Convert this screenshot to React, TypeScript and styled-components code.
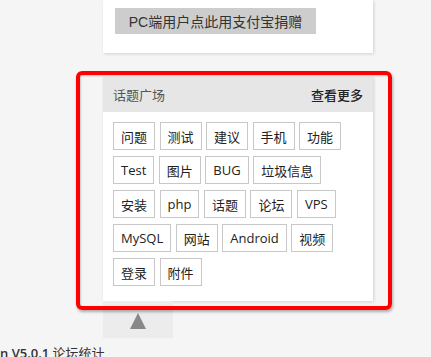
import React from "react";
import styled, { createGlobalStyle } from "styled-components";

const Global = createGlobalStyle`
  html, body { margin: 0; padding: 0; background: #f5f5f5; }
  body { font-family: "Open Sans", "Noto Sans CJK SC", sans-serif; color: #333; overflow: hidden; }
`;

const Page = styled.div`
  position: relative;
  width: 431px;
  height: 357px;
  overflow: hidden;
`;

const Column = styled.div`
  margin-left: 103px;
  width: 270px;
  display: flex;
  flex-direction: column;
`;

const Card = styled.div`
  background: #fff;
  box-shadow: 1px 1px 3px rgba(0, 0, 0, 0.14);
`;

const DonateCard = styled(Card)`
  padding: 8px 12px 19px;
`;

const DonateButton = styled.div`
  width: 201px;
  height: 26px;
  background: #cdcdcd;
  color: #333;
  font-family: "Liberation Sans", "Noto Sans CJK SC", sans-serif;
  font-size: 14px;
  display: flex;
  align-items: center;
  justify-content: center;
`;

const TopicCard = styled(Card)`
  margin-top: 24px;
`;

const Header = styled.div`
  height: 35px;
  background: #e6e6e6;
  display: flex;
  align-items: center;
  justify-content: space-between;
  padding: 0 10px;
  font-size: 13px;
`;

const Title = styled.span`
  color: #555;
`;

const More = styled.span`
  color: #222;
  font-weight: 500;
`;

const Tags = styled.div`
  display: flex;
  flex-direction: column;
  row-gap: 6px;
  padding: 10px 10px 15px;
`;

const TagRow = styled.div`
  display: flex;
  column-gap: 4.5px;
`;

const Tag = styled.span`
  height: 28px;
  box-sizing: border-box;
  border: 1px solid #c8c8c8;
  padding: 0 7px;
  display: flex;
  align-items: center;
  font-size: 13px;
  color: #222;
  white-space: nowrap;
`;

const TopButton = styled.div`
  width: 70px;
  height: 37px;
  background: #ececec;
  display: flex;
  align-items: center;
  justify-content: center;
`;

const Triangle = styled.div`
  width: 0;
  height: 0;
  border-left: 8px solid transparent;
  border-right: 8px solid transparent;
  border-bottom: 16px solid #888;
  margin-top: 2px;
`;

const Footer = styled.div`
  margin-top: 6px;
  font-size: 13px;
  line-height: 18px;
  color: #333;
  white-space: nowrap;
`;

const Strong = styled.b`
  font-weight: 600;
`;

const Highlight = styled.div`
  position: absolute;
  left: 76px;
  top: 71px;
  width: 316px;
  height: 239px;
  box-sizing: border-box;
  border: 4px solid #ff0000;
  border-radius: 6px;
  box-shadow: 1px 2px 3px rgba(0, 0, 0, 0.3), inset 1px 1px 2px rgba(0, 0, 0, 0.2);
  pointer-events: none;
`;

const rows = [
  ["问题", "测试", "建议", "手机", "功能"],
  ["Test", "图片", "BUG", "垃圾信息"],
  ["安装", "php", "话题", "论坛", "VPS"],
  ["MySQL", "网站", "Android", "视频"],
  ["登录", "附件"],
];

export default function App() {
  return (
    <Page>
      <Global />
      <Column>
        <DonateCard>
          <DonateButton>PC端用户点此用支付宝捐赠</DonateButton>
        </DonateCard>
        <TopicCard>
          <Header>
            <Title>话题广场</Title>
            <More>查看更多</More>
          </Header>
          <Tags>
            {rows.map((row, i) => (
              <TagRow key={i}>
                {row.map((t) => (
                  <Tag key={t}>{t}</Tag>
                ))}
              </TagRow>
            ))}
          </Tags>
        </TopicCard>
        <TopButton>
          <Triangle />
        </TopButton>
      </Column>
      <Footer>
        <Strong>n V5.0.1</Strong> 论坛统计
      </Footer>
      <Highlight />
    </Page>
  );
}
